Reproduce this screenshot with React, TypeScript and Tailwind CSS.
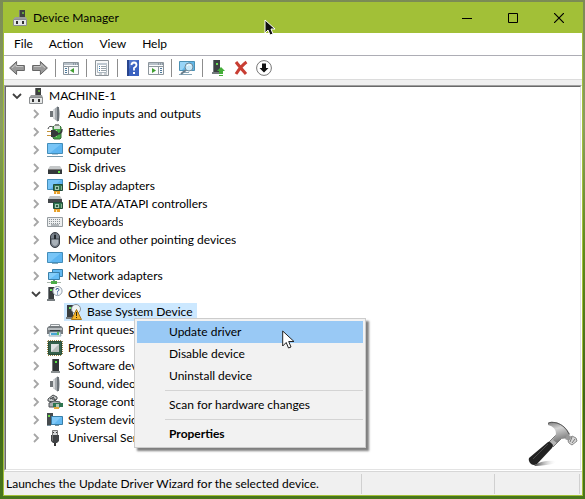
import { ReactNode, useState } from "react";

interface Device {
  name: string;
  icon: ReactNode;
  open?: boolean;
  children?: { name: string; icon: ReactNode }[];
}

function Icon({ children }: { children: ReactNode }) {
  return (
    <svg viewBox="0 0 16 16" className="h-4 w-4 shrink-0" aria-hidden="true">
      {children}
    </svg>
  );
}

const MachineIcon = () => (
  <Icon>
    <path d="M7 0h6v9H7z" fill="#3d4040" />
    <path d="M7 0h1v9H7z" fill="#777" />
    <path d="M10 2h2v2h-2z" fill="#63a33c" />
    <path d="M3 7h11l1 3H1z" fill="#9a9d9d" />
    <path d="M1.5 9.5h13v6h-13z" fill="#e6e8e8" stroke="#8b8e90" />
    <path d="M4 11h2v3H4zM10 11h2v3h-2z" fill="#333" />
  </Icon>
);

const SpeakerIcon = () => (
  <Icon>
    <path d="M3 5h3v6H3z" fill="#6f7478" />
    <path d="M6 4l5-4v16l-5-4z" fill="#a6abb0" />
    <path d="M6 4l2-1v10l-2-1z" fill="#d5d8da" />
    <path d="M10 1h2v14h-2z" fill="#6b7278" />
    <path d="M12 2q2 6 0 12z" fill="#b9bdc1" />
  </Icon>
);

const BatteryIcon = () => (
  <Icon>
    <path d="M7 2h6l1 1v11l-1 1H7l-1-1V3z" fill="#43a845" stroke="#386b38" />
    <path d="M7 2h6v3H7z" fill="#d8e2d9" />
    <path d="M8 0h4v2H8z" fill="#8a8e8a" />
    <path d="M8 6h2v7H8z" fill="#9be08a" />
    <path d="M1 5Q2 1 6 3" fill="none" stroke="#3e4142" />
    <path d="M4 6h4l3 2v3l-3 2H4z" fill="#35383a" />
    <path d="M0 7h4v1H0zM0 11h4v1H0z" fill="#c4933a" />
    <path d="M10 10q5 0 5-5" fill="none" stroke="#35383a" strokeWidth="1.5" />
  </Icon>
);

const ScreenShape = () => (
  <>
    <path d="M0.5 1.5h15v10H.5z" fill="#5db5f1" stroke="#438db9" />
    <path d="M1 2h13L3 11H1z" fill="#8bd0fb" opacity=".6" />
  </>
);

const ComputerIcon = () => (
  <Icon>
    <ScreenShape />
    <path d="M5 12h6v1H5z" fill="#b7cad5" />
    <path d="M0 14h16v1H0z" fill="#7598ab" />
  </Icon>
);

const MonitorIcon = () => (
  <Icon>
    <g transform="translate(0 1)">
      <ScreenShape />
      <path d="M5 12h6v1H5z" fill="#87aabd" />
    </g>
  </Icon>
);

const DiskIcon = () => (
  <Icon>
    <path d="M3 6h10l2 3H1z" fill="#c5c8c9" />
    <path d="M1 9h14v5H1z" fill="#34383a" />
    <path d="M1 9h14v1H1z" fill="#777" />
    <path d="M11 11h2v2h-2z" fill="#62e447" />
  </Icon>
);

const CardShape = () => (
  <>
    <path d="M6.500 6.500h9v6h-9z" fill="#2f7650" stroke="#234c3a" />
    <path d="M8 8h4v4H8z" fill="#a2c9b2" />
    <path d="M9 9h2v2H9z" fill="#315d45" />
    <path d="M7 13h6v3H7z" fill="#e7a02c" />
    <path d="M9 14h1v2H9z" fill="#fff0bf" />
    <path d="M14 8h1v4h-1z" fill="#87b18b" />
  </>
);

const DisplayIcon = () => (
  <Icon>
    <ScreenShape />
    <CardShape />
  </Icon>
);

const IdeIcon = () => (
  <Icon>
    <path d="M3 0h10l2 3H1z" fill="#bfc3c4" />
    <path d="M1 3h14v4H1z" fill="#43474a" />
    <CardShape />
  </Icon>
);

const KeyboardIcon = () => (
  <Icon>
    <path d="M.5 3.5h15v9H.5z" fill="#eceeef" stroke="#969da1" />
    <path
      d="M2 5.5h12M2 7.5h12M2 9.5h12"
      stroke="#8b9296"
      strokeDasharray="1 1"
    />
    <path d="M4 11h8" stroke="#777f84" />
  </Icon>
);

const MouseIcon = () => (
  <Icon>
    <rect x="3.5" y=".5" width="9" height="15" rx="4.5" fill="#77808a" stroke="#343a40" />
    <path d="M5 7h6v4q-1 3-3 3t-3-3z" fill="#a9b1b8" />
    <path d="M8 1v6M4 7h8" stroke="#41484e" />
    <path d="M7 3h2v4H7z" fill="#22282d" />
  </Icon>
);

const NetworkIcon = () => (
  <Icon>
    <path d="M5.5 1.5h10v7h-10z" fill="#62b9f2" stroke="#397fa9" />
    <path d="M1.5 4.5h11v7h-11z" fill="#65bdf6" stroke="#397fa9" />
    <path d="M2 5h9l-8 6H2z" fill="#9bd9fd" opacity=".6" />
    <path d="M6 12h2v2H6z" fill="#789" />
    <path d="M0 14h14v1H0z" fill="#a9b5ac" />
    <path d="M4 13h6v3H4z" fill="#4bac48" />
  </Icon>
);

const UnknownIcon = () => (
  <Icon>
    <path d="M1 1h6v12H1z" fill="#393d3f" />
    <path d="M1 1h1v12H1zM0 13h8v2H0z" fill="#777d80" />
    <path d="M3 3h2v2H3z" fill="#6ae85f" />
    <circle cx="10.5" cy="5" r="4.6" fill="#f4f7fa" stroke="#94a0ab" />
    <path d="M9 4q0-2 2-1.500q2 1 .5 2.200l-1 .8v1M10 8h1" fill="none" stroke="#345c99" />
  </Icon>
);

const WarningIcon = () => (
  <Icon>
    <path d="M1 1h6v12H1z" fill="#393d3f" />
    <path d="M0 13h8v2H0z" fill="#777d80" />
    <path d="M3 3h2v2H3z" fill="#6ae85f" />
    <circle cx="10" cy="5" r="4.500" fill="#f1f4f5" stroke="#87929c" />
    <path d="M10.500 5.500l5 10h-10z" fill="#f4b52b" stroke="#a87518" />
    <path d="M10 8h1v4h-1zM10 13h1v1h-1z" fill="#2c2515" />
  </Icon>
);

const PrinterIcon = () => (
  <Icon>
    <path d="M3.500 2.500h9v4h-9z" fill="#f3f5f6" stroke="#92989c" />
    <path d="M0 6l2-2h12l2 2v6H0z" fill="#777d81" />
    <path d="M1 6h14v2H1z" fill="#b8bdc0" />
    <path d="M3 8h10v2H3z" fill="#333a3e" />
    <path d="M3 10h10l1 4H2z" fill="#e9f5fa" stroke="#91a8b3" />
    <path d="M4 11h8v2H4z" fill="#44a7d4" />
    <path d="M10 10h2v3h-2z" fill="#58b764" />
  </Icon>
);

const ProcessorIcon = () => (
  <Icon>
    <path
      d="M1 .5h14M1 15.500h14M.5 1v14M15.500 1v14"
      stroke="#9b8542"
      strokeDasharray="1 1"
    />
    <path d="M1.500 1.500h13v13h-13z" fill="#35614b" stroke="#294d3a" />
    <path d="M4 4h8v8H4z" fill="#e1e4e3" />
    <path d="M12 4v8H4z" fill="#b8bfbc" />
  </Icon>
);

const SoftwareIcon = () => (
  <Icon>
    <path d="M5 1h7v12H5z" fill="#303436" />
    <path d="M5 1h1v12H5z" fill="#777" />
    <path d="M8 3h2v2H8z" fill="#59e544" />
    <path d="M4 13h9v2H4z" fill="#8b9193" />
  </Icon>
);

const StorageIcon = () => (
  <Icon>
    <path d="M1 5l5-4 4 2v2L6 8 1 7z" fill="#c8cbcb" stroke="#474b4d" />
    <path d="M3 5l4-2M5 5h3v2" fill="none" stroke="#2d3133" />
    <path d="M2 9l5-2 6 1v5H2z" fill="#a9adb0" stroke="#4c5154" />
    <path d="M6 9h10v4H6z" fill="#2f7650" />
    <path d="M9 10h3v3H9z" fill="#b1c7b7" />
    <path d="M7 13h5v2H7z" fill="#e2a83b" />
  </Icon>
);

const SystemIcon = () => (
  <Icon>
    <path d="M0 1h6v12H0z" fill="#464b4e" />
    <path d="M1 3h2v2H1z" fill="#6ddb4d" />
    <path d="M4.500 4.500h11v8h-11z" fill="#63b9f2" stroke="#397fa9" />
    <path d="M5 5h9l-7 7H5z" fill="#a0dcff" opacity=".5" />
    <path d="M8 13h4v1H8zM0 13h4v1H0z" fill="#78909d" />
  </Icon>
);

const UsbIcon = () => (
  <Icon>
    <path d="M5.500.5h5v5h-5z" fill="#d3d5d6" stroke="#777" />
    <path d="M6 2h1v1H6zM9 2h1v1H9z" fill="#333" />
    <path d="M4 5h8v6l-2 2H6l-2-2z" fill="#404345" />
    <path d="M5 5h1v6H5z" fill="#777" />
    <path d="M7 13h2v3H7z" fill="#333" />
  </Icon>
);

const devices: Device[] = [
  { name: "Audio inputs and outputs", icon: <SpeakerIcon /> },
  { name: "Batteries", icon: <BatteryIcon /> },
  { name: "Computer", icon: <ComputerIcon /> },
  { name: "Disk drives", icon: <DiskIcon /> },
  { name: "Display adapters", icon: <DisplayIcon /> },
  { name: "IDE ATA/ATAPI controllers", icon: <IdeIcon /> },
  { name: "Keyboards", icon: <KeyboardIcon /> },
  { name: "Mice and other pointing devices", icon: <MouseIcon /> },
  { name: "Monitors", icon: <MonitorIcon /> },
  { name: "Network adapters", icon: <NetworkIcon /> },
  {
    name: "Other devices",
    icon: <UnknownIcon />,
    open: true,
    children: [{ name: "Base System Device", icon: <WarningIcon /> }],
  },
  { name: "Print queues", icon: <PrinterIcon /> },
  { name: "Processors", icon: <ProcessorIcon /> },
  { name: "Software devices", icon: <SoftwareIcon /> },
  { name: "Sound, video and game controllers", icon: <SpeakerIcon /> },
  { name: "Storage controllers", icon: <StorageIcon /> },
  { name: "System devices", icon: <SystemIcon /> },
  { name: "Universal Serial Bus controllers", icon: <UsbIcon /> },
];

function Chevron({ open }: { open?: boolean }) {
  return (
    <svg viewBox="0 0 10 10" className="h-[10px] w-[10px]" aria-hidden="true">
      {open ? (
        <path d="M1 3l4 4 4-4" fill="none" stroke="#404040" strokeWidth="1.8" />
      ) : (
        <path d="M3 1l4 4-4 4" fill="none" stroke="#a6a6a6" strokeWidth="1.8" />
      )}
    </svg>
  );
}

function ToolButton({ label, children }: { label: string; children: ReactNode }) {
  return (
    <button
      type="button"
      aria-label={label}
      className="flex h-[22px] w-[23px] items-center justify-center"
    >
      {children}
    </button>
  );
}

function ToolDivider() {
  return (
    <div className="flex w-2 justify-center">
      <div className="h-[18px] w-px bg-[#8d8d8d]" />
    </div>
  );
}

function PanelIcon({ flip }: { flip?: boolean }) {
  return (
    <Icon>
      <path d="M.5 2.500h15v12H.5z" fill="#fafbfc" stroke="#8d969d" />
      <path d="M1 3h14v2H1z" fill="#b7c0c8" />
      <path d="M10 4h1M12 4h1M14 4h1" stroke="#637580" />
      <path d="M1 6.500h14" stroke="#8d969d" />
      {flip ? (
        <>
          <path d="M10.500 7v7" stroke="#8d969d" />
          <path d="M4 8l4 2.500L4 13z" fill="#3f9e2f" />
          <path d="M12 8.500h2M12 10.500h2M12 12.500h2" stroke="#4a7799" />
        </>
      ) : (
        <>
          <path d="M5.500 7v7" stroke="#8d969d" />
          <path d="M11 8l-4 2.500 4 2.500z" fill="#3f9e2f" />
          <path d="M2 8.500h2M2 10.500h2M2 12.500h2" stroke="#4a7799" />
        </>
      )}
    </Icon>
  );
}

function Toolbar() {
  return (
    <div className="flex h-6 items-center border-b border-[#dcdcdc] pl-px">
      <ToolButton label="Back">
        <Icon>
          <path d="M.6 8l7-6.500v4h7.800v5H7.600v4z" fill="#999" stroke="#666" />
          <path d="M3 8l4-3.500v2h7" fill="none" stroke="#c6c6c6" />
        </Icon>
      </ToolButton>
      <ToolButton label="Forward">
        <Icon>
          <path d="M15.400 8l-7-6.500v4H.6v5h7.800v4z" fill="#999" stroke="#666" />
          <path d="M2 6.500h7v-2L13 8" fill="none" stroke="#c6c6c6" />
        </Icon>
      </ToolButton>
      <ToolDivider />
      <ToolButton label="Show/Hide Console Tree">
        <PanelIcon />
      </ToolButton>
      <ToolDivider />
      <ToolButton label="Properties">
        <Icon>
          <path d="M1.500.5h13v15h-13z" fill="#f7f8f9" stroke="#8c9398" />
          <path d="M3.500 3.500h9v9h-9z" fill="#fff" stroke="#adb8c0" />
          <path d="M3 3h10v2H3z" fill="#bdc7d0" />
          <path d="M5 6.500h1M5 8.500h1M5 10.500h1" stroke="#3d80b4" />
          <path d="M7 6.500h5M7 8.500h5M7 10.500h5M5 14h3M10 14h3" stroke="#98a2a9" />
        </Icon>
      </ToolButton>
      <ToolDivider />
      <ToolButton label="Help">
        <Icon>
          <path d="M2 0h12v16H2z" fill="#3a62c0" />
          <path d="M2 0h2v16H2z" fill="#28458d" />
          <path d="M4 0h9L4 9z" fill="#6687d5" opacity=".5" />
          <path
            d="M6.500 5q0-2.500 2.500-2.500T11.500 5Q11.500 6.500 9 8v2.500M8 13h2"
            fill="none"
            stroke="#fff"
            strokeWidth="1.800"
          />
        </Icon>
      </ToolButton>
      <ToolButton label="Show/Hide Action Pane">
        <PanelIcon flip />
      </ToolButton>
      <ToolDivider />
      <ToolButton label="Scan for hardware changes">
        <svg viewBox="0 0 18 16" className="h-4 w-[18px]" aria-hidden="true">
          <path d="M1.500 1.500h15v9h-15z" fill="#61b7e8" stroke="#4c91b4" />
          <path d="M2 2h9l-7 8H2z" fill="#98d5f8" />
          <path d="M6 12h5v1H6zM1 14h13v1H1z" fill="#87a6b7" />
          <path d="M8 10l-5 4" stroke="#697e8d" strokeWidth="2" />
          <circle cx="11" cy="7" r="4" fill="#c8e8f8" stroke="#708b9c" />
          <path d="M9 6q1-2 4-1" fill="none" stroke="#fff" />
        </svg>
      </ToolButton>
      <ToolDivider />
      <ToolButton label="Update device driver">
        <Icon>
          <path d="M3 0h7v12H3z" fill="#3c4142" />
          <path d="M3 0h1v12H3zM2 12h8v2H2z" fill="#747b7d" />
          <path d="M6 3h2v2H6z" fill="#69df56" />
          <path d="M11 7l4 4h-2v2H9v-2H7z" fill="#43ad38" />
          <path d="M9 13.500h4M9 15.500h4" stroke="#43ad38" />
        </Icon>
      </ToolButton>
      <ToolButton label="Uninstall device">
        <Icon>
          <path
            d="M3 2q3 4 10 12M13.500 2Q8 6 3 14"
            fill="none"
            stroke="#c83e33"
            strokeWidth="3"
          />
        </Icon>
      </ToolButton>
      <ToolButton label="Disable device">
        <Icon>
          <circle cx="8" cy="8" r="7.400" fill="#fff" stroke="#777" />
          <path d="M6 3.500h4V8h2.500L8 12.500 3.500 8H6z" fill="#111" />
        </Icon>
      </ToolButton>
    </div>
  );
}

function DeviceTree() {
  const [open, setOpen] = useState(
    devices.filter((d) => d.open).map((d) => d.name)
  );

  const toggle = (name: string) => {
    setOpen(
      open.includes(name) ? open.filter((n) => n !== name) : [...open, name]
    );
  };

  return (
    <div className="h-full border border-b-[#e3e3e3] border-l-[#696969] border-r-[#e3e3e3] border-t-[#696969] pl-1">
      <div className="flex h-[18px] items-center">
        <button
          type="button"
          aria-label="Collapse MACHINE-1"
          className="flex w-[13px] justify-center"
        >
          <Chevron open />
        </button>
        <div className="ml-[5px]">
          <MachineIcon />
        </div>
        <span className="pl-[5px]">MACHINE-1</span>
      </div>
      <ul className="pl-[19px]">
        {devices.map((device) => {
          const isOpen = open.includes(device.name);
          return (
            <li key={device.name}>
              <div className="flex h-[18px] items-center">
                <button
                  type="button"
                  aria-label={device.name}
                  aria-expanded={isOpen}
                  onClick={() => toggle(device.name)}
                  className="flex w-[13px] justify-center"
                >
                  <Chevron open={isOpen} />
                </button>
                <div className="ml-[5px]">{device.icon}</div>
                <span className="truncate pl-[5px]">{device.name}</span>
              </div>
              {isOpen &&
                device.children?.map((child) => (
                  <div key={child.name} className="flex pl-[35px]">
                    <div className="flex h-[18px] items-center bg-[#cce8ff] pl-[2px] pr-1">
                      {child.icon}
                      <span className="pl-[5px]">{child.name}</span>
                    </div>
                  </div>
                ))}
            </li>
          );
        })}
      </ul>
    </div>
  );
}

function ContextMenu() {
  const item = "block h-[22px] w-full pl-8 text-left hover:bg-[#91c9f7]";
  return (
    <div className="absolute left-[134px] top-[318px] w-[232px] border border-[#ccc] bg-[#f2f2f2] p-[2px] shadow-[3px_3px_2px_rgba(0,0,0,0.5)]">
      <button type="button" className="block h-[22px] w-full bg-[#99c9f5] pl-8 text-left">
        Update driver
      </button>
      <button type="button" className={item}>
        Disable device
      </button>
      <button type="button" className={item}>
        Uninstall device
      </button>
      <div className="my-[3px] ml-7 h-px bg-[#d4d4d4]" />
      <button type="button" className={item}>
        Scan for hardware changes
      </button>
      <div className="my-[3px] ml-7 h-px bg-[#d4d4d4]" />
      <button type="button" className={`${item} font-bold`}>
        Properties
      </button>
    </div>
  );
}

function Hammer() {
  return (
    <svg
      viewBox="0 0 50 48"
      className="absolute bottom-[31px] right-[7px] h-12 w-[50px]"
      aria-hidden="true"
    >
      <defs>
        <linearGradient id="steel" x1="0" y1="0" x2="0.3" y2="1">
          <stop offset="0" stopColor="#777" />
          <stop offset="0.4" stopColor="#d4d4d4" />
          <stop offset="1" stopColor="#777" />
        </linearGradient>
        <linearGradient id="shade">
          <stop offset="0" stopColor="#333" />
          <stop offset="1" stopColor="#fff" stopOpacity="0" />
        </linearGradient>
      </defs>
      <path d="M6 46Q12 40 29 41q0 4-23 5z" fill="url(#shade)" />
      <path d="M28 15l5 4-8 8-5-4z" fill="#b5b5b5" stroke="#777" />
      <path
        d="M20 3q2-2 9-.5 8 2.500 13 11.500l-2 4-7 1-4 4-4-3 3-6q0-7-8-9z"
        fill="url(#steel)"
      />
      <path d="M20 3.500q2-2 9-.5 8 2.500 12 11" fill="none" stroke="#555" />
      <path d="M39 15l4 1-2 5-4-2z" fill="#999" />
      <path d="M44 16l4 2 1 3-5 4-3-2-1-2z" fill="#d8d8d8" stroke="#888" />
      <path d="M44 17l-2 5M47 19l-3 4" stroke="#777" />
      <path d="M20 22q2-1 5 3l-1 3L9 44q-3 2-6 0-3-3-2-6z" fill="#222" />
      <path d="M20 24L5 39" stroke="#4a4a4a" />
    </svg>
  );
}

export default function App() {
  return (
    <div className="relative h-screen bg-[linear-gradient(180deg,#7b8b55_0%,#8a9d62_25%,#5f8b1b_50%,#3f6418_80%,#48761c_100%)] pb-[3px] pl-[3px] pr-[2px] pt-[2px] font-[Lato,'Open_Sans',sans-serif] text-[12px] leading-[18px] text-black">
      <div className="flex h-full flex-col border border-t-0 border-[#a2c037] bg-[#f0f0f0]">
        <header className="flex h-[31px] shrink-0 items-center bg-[#a2c037] pl-2">
          <MachineIcon />
          <h1 className="flex-1 pl-[5px]">Device Manager</h1>
          <button type="button" aria-label="Minimize" className="flex h-full w-[46px] items-center justify-center">
            <svg viewBox="0 0 10 10" className="h-[10px] w-[10px]">
              <path d="M0 5.500h10" stroke="#000" />
            </svg>
          </button>
          <button type="button" aria-label="Maximize" className="flex h-full w-[46px] items-center justify-center">
            <svg viewBox="0 0 10 10" className="h-[10px] w-[10px]">
              <path d="M.5.5h9v9h-9z" fill="none" stroke="#000" />
            </svg>
          </button>
          <button type="button" aria-label="Close" className="flex h-full w-[46px] items-center justify-center">
            <svg viewBox="0 0 10 10" className="h-[10px] w-[10px]">
              <path d="M0 0l10 10M10 0L0 10" stroke="#000" strokeWidth="1.200" />
            </svg>
          </button>
        </header>
        <div className="shrink-0 bg-white">
          <nav className="flex h-[23px] items-center gap-4 border-b border-[#adadb5] pl-[10px]">
            <button type="button">File</button>
            <button type="button">Action</button>
            <button type="button">View</button>
            <button type="button">Help</button>
          </nav>
          <Toolbar />
        </div>
        <main className="mt-[5px] min-h-0 flex-1 overflow-hidden border border-b-white border-l-[#a0a0a0] border-r-white border-t-[#a0a0a0] bg-white">
          <DeviceTree />
        </main>
        <footer className="flex h-6 shrink-0 items-center border-t border-[#d7d7d7]">
          <p className="flex-1 truncate pl-[2px]">
            Launches the Update Driver Wizard for the selected device.
          </p>
          <div className="h-5 w-[133px] border-l border-[#d0d0d0]" />
          <div className="mr-[2px] h-5 w-[86px] border-x border-[#d0d0d0]" />
        </footer>
      </div>
      <Hammer />
      <ContextMenu />
      <svg viewBox="0 0 12 18" className="absolute left-[264px] top-[19px] h-[18px] w-3" aria-hidden="true">
        <path d="M1 1v13l3-3 2 5 3-1-2-5h4z" fill="#111" stroke="#fff" />
      </svg>
      <svg viewBox="0 0 13 20" className="absolute left-[282px] top-[330px] h-5 w-[13px]" aria-hidden="true">
        <path d="M.7 1v15l3.500-3.500L6.500 18l2.500-1-2.300-5.500H12z" fill="#fff" stroke="#222" />
      </svg>
    </div>
  );
}
